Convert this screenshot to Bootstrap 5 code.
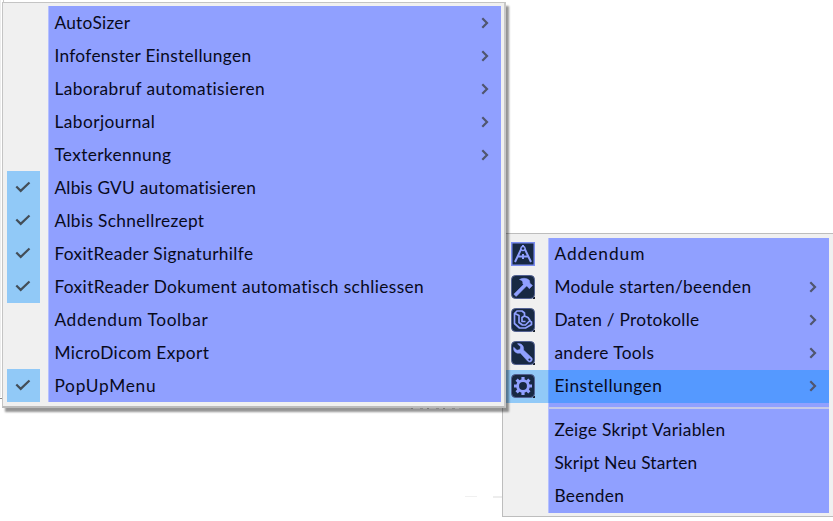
<!DOCTYPE html>
<html lang="de">
<head>
<meta charset="utf-8">
<title>Addendum</title>
<meta name="viewport" content="width=device-width, initial-scale=1">
<link href="https://cdn.jsdelivr.net/npm/bootstrap@5.3.0/dist/css/bootstrap.min.css" rel="stylesheet">
<style>
body{width:833px;height:521px;background:#fff;font-family:Lato,"Open Sans",sans-serif;font-size:17.3px;line-height:33px;color:#080a1c}
.popup{position:absolute;background:#f0f0f0;border:1px solid #bdbdbd}
.popup-sub{left:2px;top:2px;width:504px;height:406px;padding:3px 3px 4px 4px;border-color:#c4c4c4;border-right:2px solid #c8c8c8;border-bottom:2px solid #bbb;box-shadow:3px 4px 2px rgba(0,0,0,.42);z-index:2}
.popup-main{left:502px;top:233px;width:332px;height:284px;padding:4px 4px 3px 0}
.menu-line{height:33px}
.gutter{width:33px;height:33px;margin-right:8px;flex:none}
.popup-main .gutter{width:45px;margin-right:0;padding-left:8px;padding-bottom:2px}
.fill{background:#90a0ff;padding-left:5.4px;padding-right:12px;border-left:1px solid #b5c0ff;white-space:nowrap}
.popup-main .fill{padding-bottom:2px}
.ticked .gutter{background:#91c9f7}
.ticked .gutter svg{margin:-1px 1px 0 0}
.hot .gutter{background:#91c9f7}
.hot .fill{background:#5599ff;border-left-color:#6ba6ff}
.divide{height:11px;padding-left:45px}
.divide>div{height:11px;background:#90a0ff;padding-top:4px;border-left:1px solid #b5c0ff}
.divide span{display:block;height:2px;background:#c5c9e8}
svg{display:block;flex:none}
.edge{position:absolute;background:#c8c8c8}
.remnant{left:411px;top:408px;width:48px;height:1px;z-index:3;background:repeating-linear-gradient(90deg,#777 0 2px,#a5a5a5 2px 9px,#888 9px 12px,#a8a8a8 12px 16px)}
</style>
</head>
<body class="position-relative overflow-hidden m-0">
<svg width="0" height="0" class="position-absolute">
<symbol id="tick" viewBox="0 0 16 12"><path d="M1.3 5.5 5.7 9.9 14.5 1.5" fill="none" stroke="#434e58" stroke-width="2.2"/></symbol>
<symbol id="arrow" viewBox="0 0 8 12"><path d="M1.3 1.3 6 6 1.3 10.7" fill="none" stroke="#50566f" stroke-width="2.2"/></symbol>
<symbol id="compass" viewBox="0 0 24 24"><path d="M.75.75h22.5v22.5H.75z" fill="#182943" stroke="#7b8df0" stroke-width="1.5"/><path d="M4 20 10.2 7h3.6L20 20M7 14.5h10M12 3v4M12 12v5" fill="none" stroke="#90a0ff" stroke-width="2"/><circle cx="12" cy="6.5" r="2" fill="#182943" stroke="#90a0ff" stroke-width="1.3"/></symbol>
<symbol id="hammer" viewBox="0 0 24 24"><path d="M22 22h2v2h-2z" fill="#18202c"/><rect x=".5" y=".5" width="23" height="23" rx="4" fill="#182943" stroke="#536193"/><path d="M2.800 19.200 13.500 8.500l2.300 2.300L5.200 21.500z M8.500 4.500c3.500-1.800 7.400-1.600 10 1l.4 2.700 2.600 2.300-3.200 3.200-2.400-2.800-2-.2-2.200-2.200C12.400 6.500 11 5.300 8.500 4.500z" fill="#90a0ff" stroke="#90a0ff" stroke-width=".5"/></symbol>
<symbol id="hand" viewBox="0 0 24 24"><path d="M22 22h2v2h-2z" fill="#18202c"/><rect x=".5" y=".5" width="23" height="23" rx="4" fill="#182943" stroke="#536193"/><path d="M13.500 7.500V5L11 3H6L3.500 5.500V15.500L8.500 20H14.500L20.500 16.500V14L18.500 13M4 5.500 8 7.500V14.500L11.500 17H14.500L19 12.500 17 9.500 13.500 8 11 9.500V13.500H14.500" fill="none" stroke="#90a0ff" stroke-width="1.700" stroke-linejoin="round"/></symbol>
<symbol id="wrench" viewBox="0 0 24 24"><path d="M22 22h2v2h-2z" fill="#18202c"/><rect x=".5" y=".5" width="23" height="23" rx="4" fill="#182943" stroke="#536193"/><path d="M2.700 6.200 6 9.300 9 8.500 9.600 5.700 6.500 2.800C10 1.800 13.400 5 12.500 9l8 7.500c2.400 2.500-1 6.200-3.700 3.800L9.300 12C5.300 13.200 1.800 10 2.700 6.200z" fill="#90a0ff" stroke="#90a0ff" stroke-width=".5"/><circle cx="18.500" cy="18.600" r="1.100" fill="#182943"/></symbol>
<symbol id="gear" viewBox="0 0 24 24"><path d="M22 22h2v2h-2z" fill="#18202c"/><rect x=".5" y=".5" width="23" height="23" rx="4" fill="#182943" stroke="#536193"/><circle cx="12" cy="12" r="5.400" fill="none" stroke="#90a0ff" stroke-width="2.900"/><path d="M12 3v3M12 18v3M3 12h3M18 12h3M5.600 5.600l2.200 2.200M16.200 16.200l2.200 2.200M5.600 18.400l2.200-2.200M16.200 7.800l2.200-2.200" stroke="#90a0ff" stroke-width="3.200"/></symbol>
</svg>

<div class="edge" style="left:3px;top:0;width:1px;height:2px"></div>
<div class="edge" style="left:0;top:0;width:1px;height:397px;background:#ededed"></div>
<div class="edge" style="left:0;top:398px;width:3px;height:1px;background:#888"></div>

<nav class="popup popup-sub" id="sub"></nav>
<nav class="popup popup-main" id="main"></nav>
<div class="edge remnant"></div>
<div class="edge" style="left:465px;top:496px;width:12px;height:1px;background:#f0f0f0"></div>
<div class="edge" style="left:493px;top:496px;width:9px;height:2px;background:#ededed"></div>

<script src="https://cdn.jsdelivr.net/npm/bootstrap@5.3.0/dist/js/bootstrap.bundle.min.js"></script>
<script>
// Each entry: label, label width, left icon, has submenu, row class
const sub=[["AutoSizer",76,"",1],["Infofenster Einstellungen",197,"",1],["Laborabruf automatisieren",211,"",1],["Laborjournal",101,"",1],["Texterkennung",117,"",1],
["Albis GVU automatisieren",202,"tick",0,"ticked"],["Albis Schnellrezept",150,"tick",0,"ticked"],["FoxitReader Signaturhilfe",199,"tick",0,"ticked"],["FoxitReader Dokument automatisch schliessen",370,"tick",0,"ticked"],
["Addendum Toolbar",154,"",0],["MicroDicom Export",155,"",0],["PopUpMenu",102,"tick",0,"ticked"]];
const main=[["Addendum",91,"compass",0],["Module starten/beenden",197,"hammer",1],["Daten / Protokolle",145,"hand",1],["andere Tools",100,"wrench",1],["Einstellungen",108,"gear",1,"hot"],null,
["Zeige Skript Variablen",171,"",0],["Skript Neu Starten",143,"",0],["Beenden",70,"",0]];
function build(id,rows){
  document.getElementById(id).innerHTML=rows.map(r=>{
    if(!r) return '<div class="divide"><div><span></span></div></div>';
    const s=r[2]==="tick"?[16,12]:[24,24];
    return `<div class="menu-line d-flex ${r[4]||""}"><div class="gutter d-flex align-items-center ${id==="sub"?"justify-content-center":""}">${r[2]?`<svg width="${s[0]}" height="${s[1]}"><use href="#${r[2]}"/></svg>`:""}</div><div class="fill flex-grow-1 d-flex align-items-center justify-content-between"><span class="caption-text" data-w="${r[1]}">${r[0]}</span>${r[3]?'<svg width="8" height="12"><use href="#arrow"/></svg>':""}</div></div>`;
  }).join("");
}
build("sub",sub);build("main",main);
document.querySelectorAll(".caption-text").forEach(e=>{
  e.style.letterSpacing=(e.dataset.w-e.getBoundingClientRect().width)/e.textContent.length+"px";
});
</script>
</body>
</html>
